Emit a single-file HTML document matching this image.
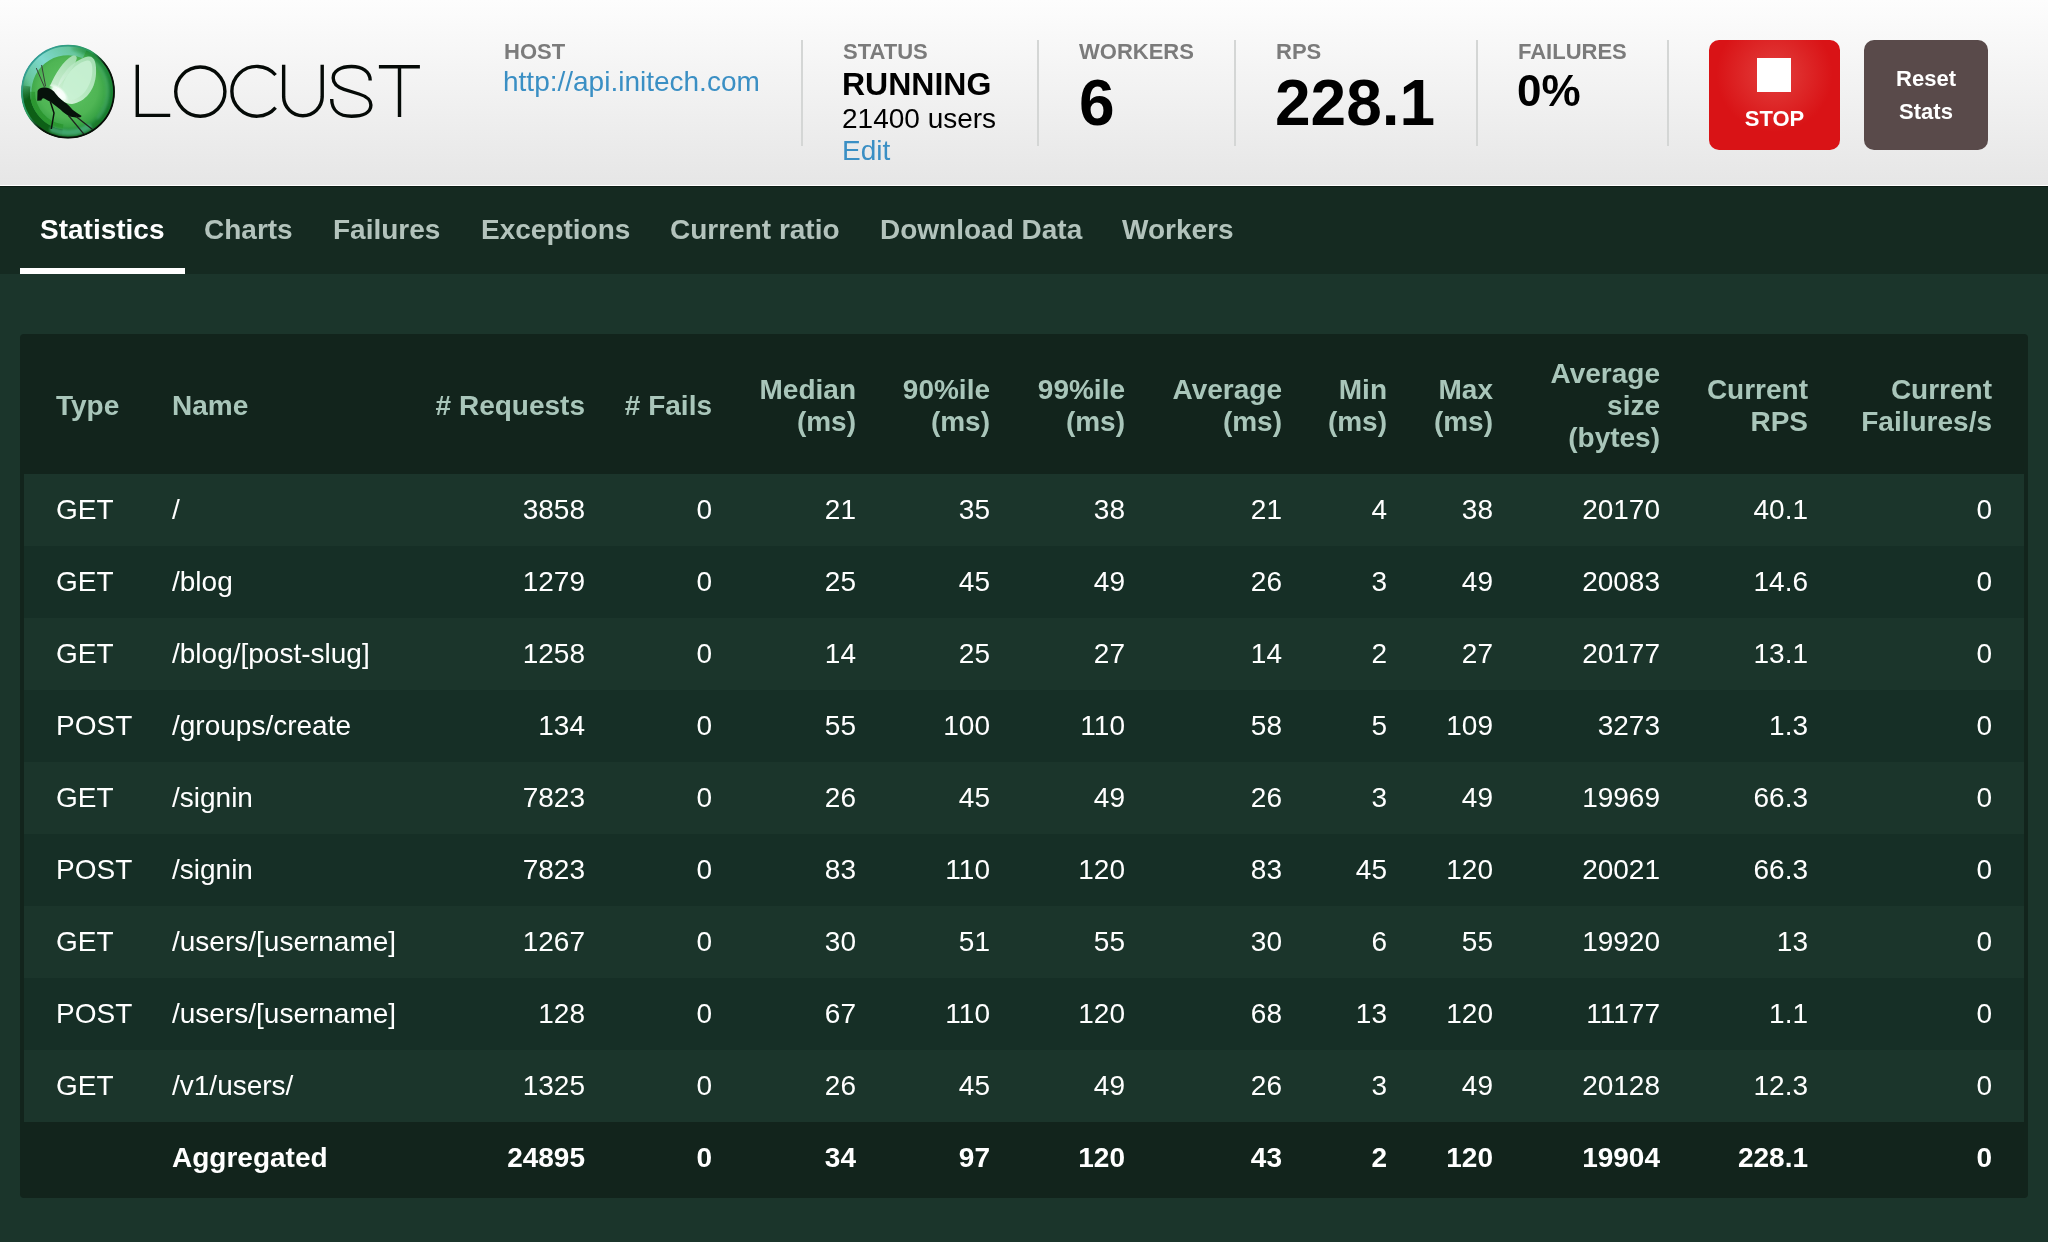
<!DOCTYPE html>
<html><head><meta charset="utf-8">
<style>
*{margin:0;padding:0;box-sizing:border-box}
.header,.nav,.box{will-change:transform}
html,body{width:2048px;height:1242px;overflow:hidden}
body{-webkit-font-smoothing:antialiased;background:#1b352b;font-family:"Liberation Sans",sans-serif;color:#fff;position:relative}
.header{position:absolute;left:0;top:0;width:2048px;height:185px;background:linear-gradient(#fdfdfd,#e6e6e6)}
.hl{position:absolute;top:0;left:0;height:1px;width:2048px}
.lbl{position:absolute;font-size:22px;font-weight:bold;color:#7b7b7b;white-space:nowrap;line-height:26px}
.val{position:absolute;white-space:nowrap;color:#000}
.div{position:absolute;top:40px;width:2px;height:106px;background:#d4d6d5}
.link{color:#3a8fc4}
.btn{position:absolute;top:40px;height:110px;border-radius:10px;color:#fff;font-weight:bold;font-size:22px;text-align:center}
.nav{position:absolute;left:0;top:185px;width:2048px;height:89px;background:#152a21}
.tab{position:absolute;top:0;height:89px;font-size:28px;font-weight:bold;color:#b3c3bc;white-space:nowrap}
.box{position:absolute;left:20px;top:334px;width:2008px;height:864px;background:#12241c;border-radius:4px}
table{position:absolute;left:4px;top:4px;width:2000px;border-collapse:collapse;table-layout:fixed}
th,td{font-size:28px;line-height:32px;padding:20px 32px 20px 0;white-space:nowrap;text-align:right}
th{color:#a9c6ba;font-weight:bold;height:136px;vertical-align:middle}
td{height:72px}
th.l,td.l{text-align:left;padding:20px 0 20px 32px}
tr td.l:first-child,tr th.l:first-child{padding-left:32px}
tr.r1{background:#1b352b}
tr.r0{background:#162f26}
tr.agg td{font-weight:bold}
</style></head><body>
<div class="header">
<svg style="position:absolute;left:0;top:0" width="440" height="185" viewBox="0 0 440 185">
  <defs>
    <clipPath id="cc"><circle cx="68" cy="91.7" r="46.6"/></clipPath>
    <radialGradient id="gbase" cx="68" cy="88" r="48" gradientUnits="userSpaceOnUse">
      <stop offset="0" stop-color="#5ec464"/>
      <stop offset="0.62" stop-color="#4fb554"/>
      <stop offset="0.8" stop-color="#3aa446"/>
      <stop offset="0.9" stop-color="#22893a"/>
      <stop offset="1" stop-color="#136b1f"/>
    </radialGradient>
    <linearGradient id="gcy" x1="22" y1="108" x2="94" y2="47" gradientUnits="userSpaceOnUse">
      <stop offset="0" stop-color="#58b98a" stop-opacity="0"/>
      <stop offset="0.25" stop-color="#6ccaa6" stop-opacity="0.9"/>
      <stop offset="0.5" stop-color="#7fd9d0" stop-opacity="1"/>
      <stop offset="0.8" stop-color="#6cc9a6" stop-opacity="0.9"/>
      <stop offset="1" stop-color="#3aa86a" stop-opacity="0"/>
    </linearGradient>
    <linearGradient id="gout" x1="0" y1="0" x2="1" y2="1">
      <stop offset="0" stop-color="#3aa0b8"/>
      <stop offset="0.42" stop-color="#2a9a58"/>
      <stop offset="0.55" stop-color="#0b140b"/>
      <stop offset="1" stop-color="#050805"/>
    </linearGradient>
    <radialGradient id="gglow" cx="0.5" cy="0.5" r="0.5">
      <stop offset="0" stop-color="#ffffff" stop-opacity="1"/>
      <stop offset="0.6" stop-color="#f8fffa" stop-opacity="0.92"/>
      <stop offset="1" stop-color="#e0f8e6" stop-opacity="0"/>
    </radialGradient>
<filter id="bl" x="-10%" y="-10%" width="120%" height="120%"><feGaussianBlur stdDeviation="0.5"/></filter>
    <linearGradient id="gdk" x1="20" y1="85" x2="70" y2="145" gradientUnits="userSpaceOnUse">
      <stop offset="0" stop-color="#0f5f19" stop-opacity="0"/>
      <stop offset="0.2" stop-color="#0f5f19" stop-opacity="1"/>
      <stop offset="0.75" stop-color="#0f5f19" stop-opacity="1"/>
      <stop offset="1" stop-color="#0f5f19" stop-opacity="0"/>
    </linearGradient>
    <linearGradient id="gmd" x1="20" y1="85" x2="70" y2="145" gradientUnits="userSpaceOnUse">
      <stop offset="0" stop-color="#2a962f" stop-opacity="0"/>
      <stop offset="0.25" stop-color="#2a962f" stop-opacity="0.95"/>
      <stop offset="0.7" stop-color="#2a962f" stop-opacity="0.95"/>
      <stop offset="1" stop-color="#2a962f" stop-opacity="0"/>
    </linearGradient>
<linearGradient id="gwing" x1="58" y1="98" x2="92" y2="60" gradientUnits="userSpaceOnUse">
      <stop offset="0" stop-color="#e8f9ec"/>
      <stop offset="0.35" stop-color="#c4eece"/>
      <stop offset="1" stop-color="#b2e5bf"/>
    </linearGradient>
    <linearGradient id="gwing2" x1="50" y1="88" x2="76" y2="56" gradientUnits="userSpaceOnUse">
      <stop offset="0" stop-color="#e0f6e6"/>
      <stop offset="1" stop-color="#aee3bb"/>
    </linearGradient>
<filter id="bl2" x="-20%" y="-20%" width="140%" height="140%"><feGaussianBlur stdDeviation="1.2"/></filter>
    <linearGradient id="grt" x1="75" y1="45" x2="75" y2="140" gradientUnits="userSpaceOnUse">
      <stop offset="0" stop-color="#1f8a3c" stop-opacity="0"/>
      <stop offset="0.15" stop-color="#1f8a3c" stop-opacity="0.85"/>
      <stop offset="0.8" stop-color="#177a2a" stop-opacity="0.95"/>
      <stop offset="1" stop-color="#177a2a" stop-opacity="0"/>
    </linearGradient>
  </defs>
  <g clip-path="url(#cc)">
    <rect x="15" y="40" width="110" height="105" fill="url(#gbase)"/>
    <g filter="url(#bl)">
    <path d="M27.4 100.3 A41.5 41.5 0 0 1 84.9 53.8" fill="none" stroke="url(#gcy)" stroke-width="10"/>
    <path d="M62.1 133.8 A42.5 42.5 0 0 1 25.9 85.8" fill="none" stroke="url(#gdk)" stroke-width="9"/>
    <path d="M63.1 126.9 A35.5 35.5 0 0 1 32.5 91.7" fill="none" stroke="url(#gmd)" stroke-width="5"/>
    </g>
    <g filter="url(#bl2)">
    <path d="M71.8 47.9 A44 44 0 0 1 71.8 135.5" fill="none" stroke="url(#grt)" stroke-width="5"/>
    <path d="M93.4 61.4 A39.5 39.5 0 0 1 98.3 117.1" fill="none" stroke="#48ad70" stroke-width="4" opacity="0.4" stroke-linecap="round"/>
    <path d="M88.5 127.2 A41 41 0 0 1 52.6 129.7" fill="none" stroke="#50b585" stroke-width="6" opacity="0.7" stroke-linecap="round"/>
    </g>
    <path d="M57 92 C 57 78, 72 60, 88 56.5 C 95 55.5, 96.5 64, 96 74 C 95 90, 85 102, 72 104 C 64 104, 57 98, 57 92 Z" fill="url(#gwing)" opacity="0.9"/>
    <path d="M62 90 C 63 78, 73 64, 87 60.5 C 92 59.5, 93 67, 92 75 C 90 88, 82 98, 72 100 C 66 100, 62 96, 62 90 Z" fill="#c9f1d4" opacity="0.85"/>
    <path d="M50 86 C 55 74, 64 60, 72 56 C 76 54.5, 78 57, 76 61 C 72 70, 64 80, 57 88 Z" fill="url(#gwing2)" opacity="0.85"/>
    <ellipse cx="59" cy="93.2" rx="13" ry="6" transform="rotate(44 59 93.2)" fill="url(#gglow)"/>
    <path d="M 37.5 91.4 C 38 89, 41 87.5, 44.6 87.5 C 48 87.5, 51 89, 54 91.4 C 56 94, 58 96.5, 59.8 98.2 C 62 100.5, 64 101.8, 66.2 103.3 C 68.5 105, 70.5 107.5, 72.6 109.8 C 75.5 112, 78.5 114, 81.7 115.9 L 80.4 117.2 L 75.9 117.5 L 69.4 116.5 C 67 114.8, 65 113.5, 63 112 C 61 110, 58.5 108, 56.5 106.5 C 54.5 105, 52.5 103.3, 50.7 102 C 48 100.5, 45.5 99, 43.7 98.2 L 42 98.8 L 41.4 100.4 L 37.2 100.7 Z" fill="#07120b"/>
    <path d="M50.3 101.5 L 54 113 L 51.3 129" fill="none" stroke="#0b120c" stroke-width="1.5"/>
    <path d="M68.5 115.5 L 84.5 134.8 M 76 116.5 L 92.5 129.5" fill="none" stroke="#1f241f" stroke-width="1.3"/>
    <path d="M36.3 68.1 L 44.7 87.6 M 41.6 65 L 45.6 86.3" fill="none" stroke="#3a3f3a" stroke-width="1"/>
  </g>
  <circle cx="68" cy="91.7" r="46" fill="none" stroke="url(#gout)" stroke-width="1.8"/>
  <g fill="none" stroke="#050a07" stroke-width="3.4">
    <path d="M137.3 64.8 L137.3 115.4 L170.2 115.4"/>
    <circle cx="200.3" cy="91.6" r="24.6"/>
    <path d="M 275.6 75 A 24.9 24.9 0 1 0 275.6 107.6"/>
    <path d="M283.65 64.8 L283.65 96.9 A 19.28 19.28 0 0 0 322.2 96.9 L322.2 64.8"/>
    <path d="M370.2 80.5 C 370.2 71.5, 362 66.5, 351.5 66.5 C 340.5 66.5, 333.2 71, 333.2 78 C 333.2 84, 337 87, 344 89.3 L 359 94 C 367 96.5, 370.9 99.5, 370.9 105 C 370.9 112.5, 363 116.2, 351.5 116.2 C 339 116.2, 331.7 110, 331.7 98.9"/>
    <path d="M378.9 66.75 L419.9 66.75 M399.5 66.75 L399.5 116.9"/>
  </g>
</svg>
  <div class="lbl" style="left:504px;top:39px">HOST</div>
  <div class="val link" style="left:503px;top:66px;font-size:28px">http://api.initech.com</div>
  <div class="div" style="left:801px"></div>
  <div class="lbl" style="left:843px;top:39px">STATUS</div>
  <div class="val" style="left:842px;top:66px;font-size:32px;font-weight:bold">RUNNING</div>
  <div class="val" style="left:842px;top:103px;font-size:28px">21400 users</div>
  <div class="val link" style="left:842px;top:135px;font-size:28px">Edit</div>
  <div class="div" style="left:1037px"></div>
  <div class="lbl" style="left:1079px;top:39px">WORKERS</div>
  <div class="val" style="left:1079px;top:66px;font-size:64px;font-weight:bold">6</div>
  <div class="div" style="left:1234px"></div>
  <div class="lbl" style="left:1276px;top:39px">RPS</div>
  <div class="val" style="left:1275px;top:66px;font-size:64px;font-weight:bold">228.1</div>
  <div class="div" style="left:1476px"></div>
  <div class="lbl" style="left:1518px;top:39px">FAILURES</div>
  <div class="val" style="left:1517px;top:66px;font-size:44px;font-weight:bold">0%</div>
  <div class="div" style="left:1667px"></div>
  <div class="btn" style="left:1709px;width:131px;background:radial-gradient(circle at 50% 31%,#e33e3e 0,#de2a2a 28px,#d91316 58px)">
    <div style="position:absolute;left:48px;top:18px;width:34px;height:34px;background:#fff"></div>
    <div style="position:absolute;left:0;width:131px;top:66px;line-height:26px">STOP</div>
  </div>
  <div class="btn" style="left:1864px;width:124px;background:#594a4a">
    <div style="position:absolute;left:0;width:124px;top:23px;line-height:32.5px">Reset<br>Stats</div>
  </div>
</div>
<div class="nav">
  <div style="position:absolute;left:0;top:0;width:2048px;height:1px;background:#fff"></div>
  <div style="position:absolute;left:0;top:1px;width:2048px;height:1px;background:#0c1c14"></div>
  <div class="tab" style="left:40px;color:#fff;top:29px">Statistics</div>
  <div class="tab" style="left:204px;top:29px">Charts</div>
  <div class="tab" style="left:333px;top:29px">Failures</div>
  <div class="tab" style="left:481px;top:29px">Exceptions</div>
  <div class="tab" style="left:670px;top:29px">Current ratio</div>
  <div class="tab" style="left:880px;top:29px">Download Data</div>
  <div class="tab" style="left:1122px;top:29px">Workers</div>
  <div style="position:absolute;left:20px;top:83px;width:165px;height:6px;background:#fff"></div>
</div>
<div class="box">
<table>
<colgroup><col style="width:116px"><col style="width:290px"><col style="width:187px"><col style="width:127px"><col style="width:144px"><col style="width:134px"><col style="width:135px"><col style="width:157px"><col style="width:105px"><col style="width:106px"><col style="width:167px"><col style="width:148px"><col style="width:184px"></colgroup>
<thead><tr>
<th class="l">Type</th><th class="l">Name</th><th># Requests</th><th># Fails</th><th>Median<br>(ms)</th><th>90%ile<br>(ms)</th><th>99%ile<br>(ms)</th><th>Average<br>(ms)</th><th>Min<br>(ms)</th><th>Max<br>(ms)</th><th>Average<br>size<br>(bytes)</th><th>Current<br>RPS</th><th>Current<br>Failures/s</th>
</tr></thead>
<tbody>
<tr class="r1"><td class="l">GET</td><td class="l">/</td><td>3858</td><td>0</td><td>21</td><td>35</td><td>38</td><td>21</td><td>4</td><td>38</td><td>20170</td><td>40.1</td><td>0</td></tr>
<tr class="r0"><td class="l">GET</td><td class="l">/blog</td><td>1279</td><td>0</td><td>25</td><td>45</td><td>49</td><td>26</td><td>3</td><td>49</td><td>20083</td><td>14.6</td><td>0</td></tr>
<tr class="r1"><td class="l">GET</td><td class="l">/blog/[post-slug]</td><td>1258</td><td>0</td><td>14</td><td>25</td><td>27</td><td>14</td><td>2</td><td>27</td><td>20177</td><td>13.1</td><td>0</td></tr>
<tr class="r0"><td class="l">POST</td><td class="l">/groups/create</td><td>134</td><td>0</td><td>55</td><td>100</td><td>110</td><td>58</td><td>5</td><td>109</td><td>3273</td><td>1.3</td><td>0</td></tr>
<tr class="r1"><td class="l">GET</td><td class="l">/signin</td><td>7823</td><td>0</td><td>26</td><td>45</td><td>49</td><td>26</td><td>3</td><td>49</td><td>19969</td><td>66.3</td><td>0</td></tr>
<tr class="r0"><td class="l">POST</td><td class="l">/signin</td><td>7823</td><td>0</td><td>83</td><td>110</td><td>120</td><td>83</td><td>45</td><td>120</td><td>20021</td><td>66.3</td><td>0</td></tr>
<tr class="r1"><td class="l">GET</td><td class="l">/users/[username]</td><td>1267</td><td>0</td><td>30</td><td>51</td><td>55</td><td>30</td><td>6</td><td>55</td><td>19920</td><td>13</td><td>0</td></tr>
<tr class="r0"><td class="l">POST</td><td class="l">/users/[username]</td><td>128</td><td>0</td><td>67</td><td>110</td><td>120</td><td>68</td><td>13</td><td>120</td><td>11177</td><td>1.1</td><td>0</td></tr>
<tr class="r1"><td class="l">GET</td><td class="l">/v1/users/</td><td>1325</td><td>0</td><td>26</td><td>45</td><td>49</td><td>26</td><td>3</td><td>49</td><td>20128</td><td>12.3</td><td>0</td></tr>
<tr class="agg"><td class="l"></td><td class="l">Aggregated</td><td>24895</td><td>0</td><td>34</td><td>97</td><td>120</td><td>43</td><td>2</td><td>120</td><td>19904</td><td>228.1</td><td>0</td></tr>
</tbody>
</table>
</div>
</body></html>
